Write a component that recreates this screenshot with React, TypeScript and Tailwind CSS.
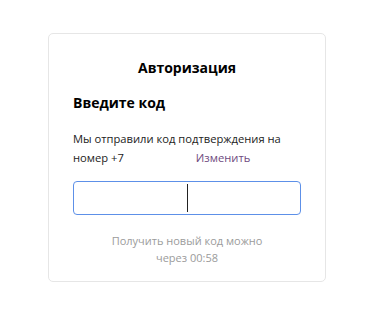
import React from "react";

export default function App() {
  return (
    <div className="w-[372px] h-[310px] bg-white" style={{ fontFamily: '"Open Sans", "Noto Sans", sans-serif' }}>
      <div className="pt-[33px]">
        <div className="ml-[48px] w-[278px] h-[249px] border border-[#e6e6e6] rounded-[5px] bg-white px-[24px] flex flex-col">
          <div className="mt-[23px] h-[22px] text-center text-[14px] font-bold leading-[22px] text-black">Авторизация</div>
          <div className="mt-[13px] h-[22px] text-[14px] font-bold leading-[22px] text-black">Введите код</div>
          <div className="mt-[15px] text-[11.2px] leading-[19px] text-[#222]">
            Мы отправили код подтверждения на
            <br />
            номер +7<span className="ml-[72px] text-[#6e4a7e]">Изменить</span>
          </div>
          <div className="mt-[14px] h-[34px] w-[228px] border border-[#5d90e8] rounded-[4px] flex items-center">
            <div className="ml-[113px] w-px h-[28px] bg-[#222]" />
          </div>
          <div className="mt-[17px] text-center text-[11px] leading-[17px] text-[#9b9b9b]">
            Получить новый код можно
            <br />
            через 00:58
          </div>
        </div>
      </div>
    </div>
  );
}
